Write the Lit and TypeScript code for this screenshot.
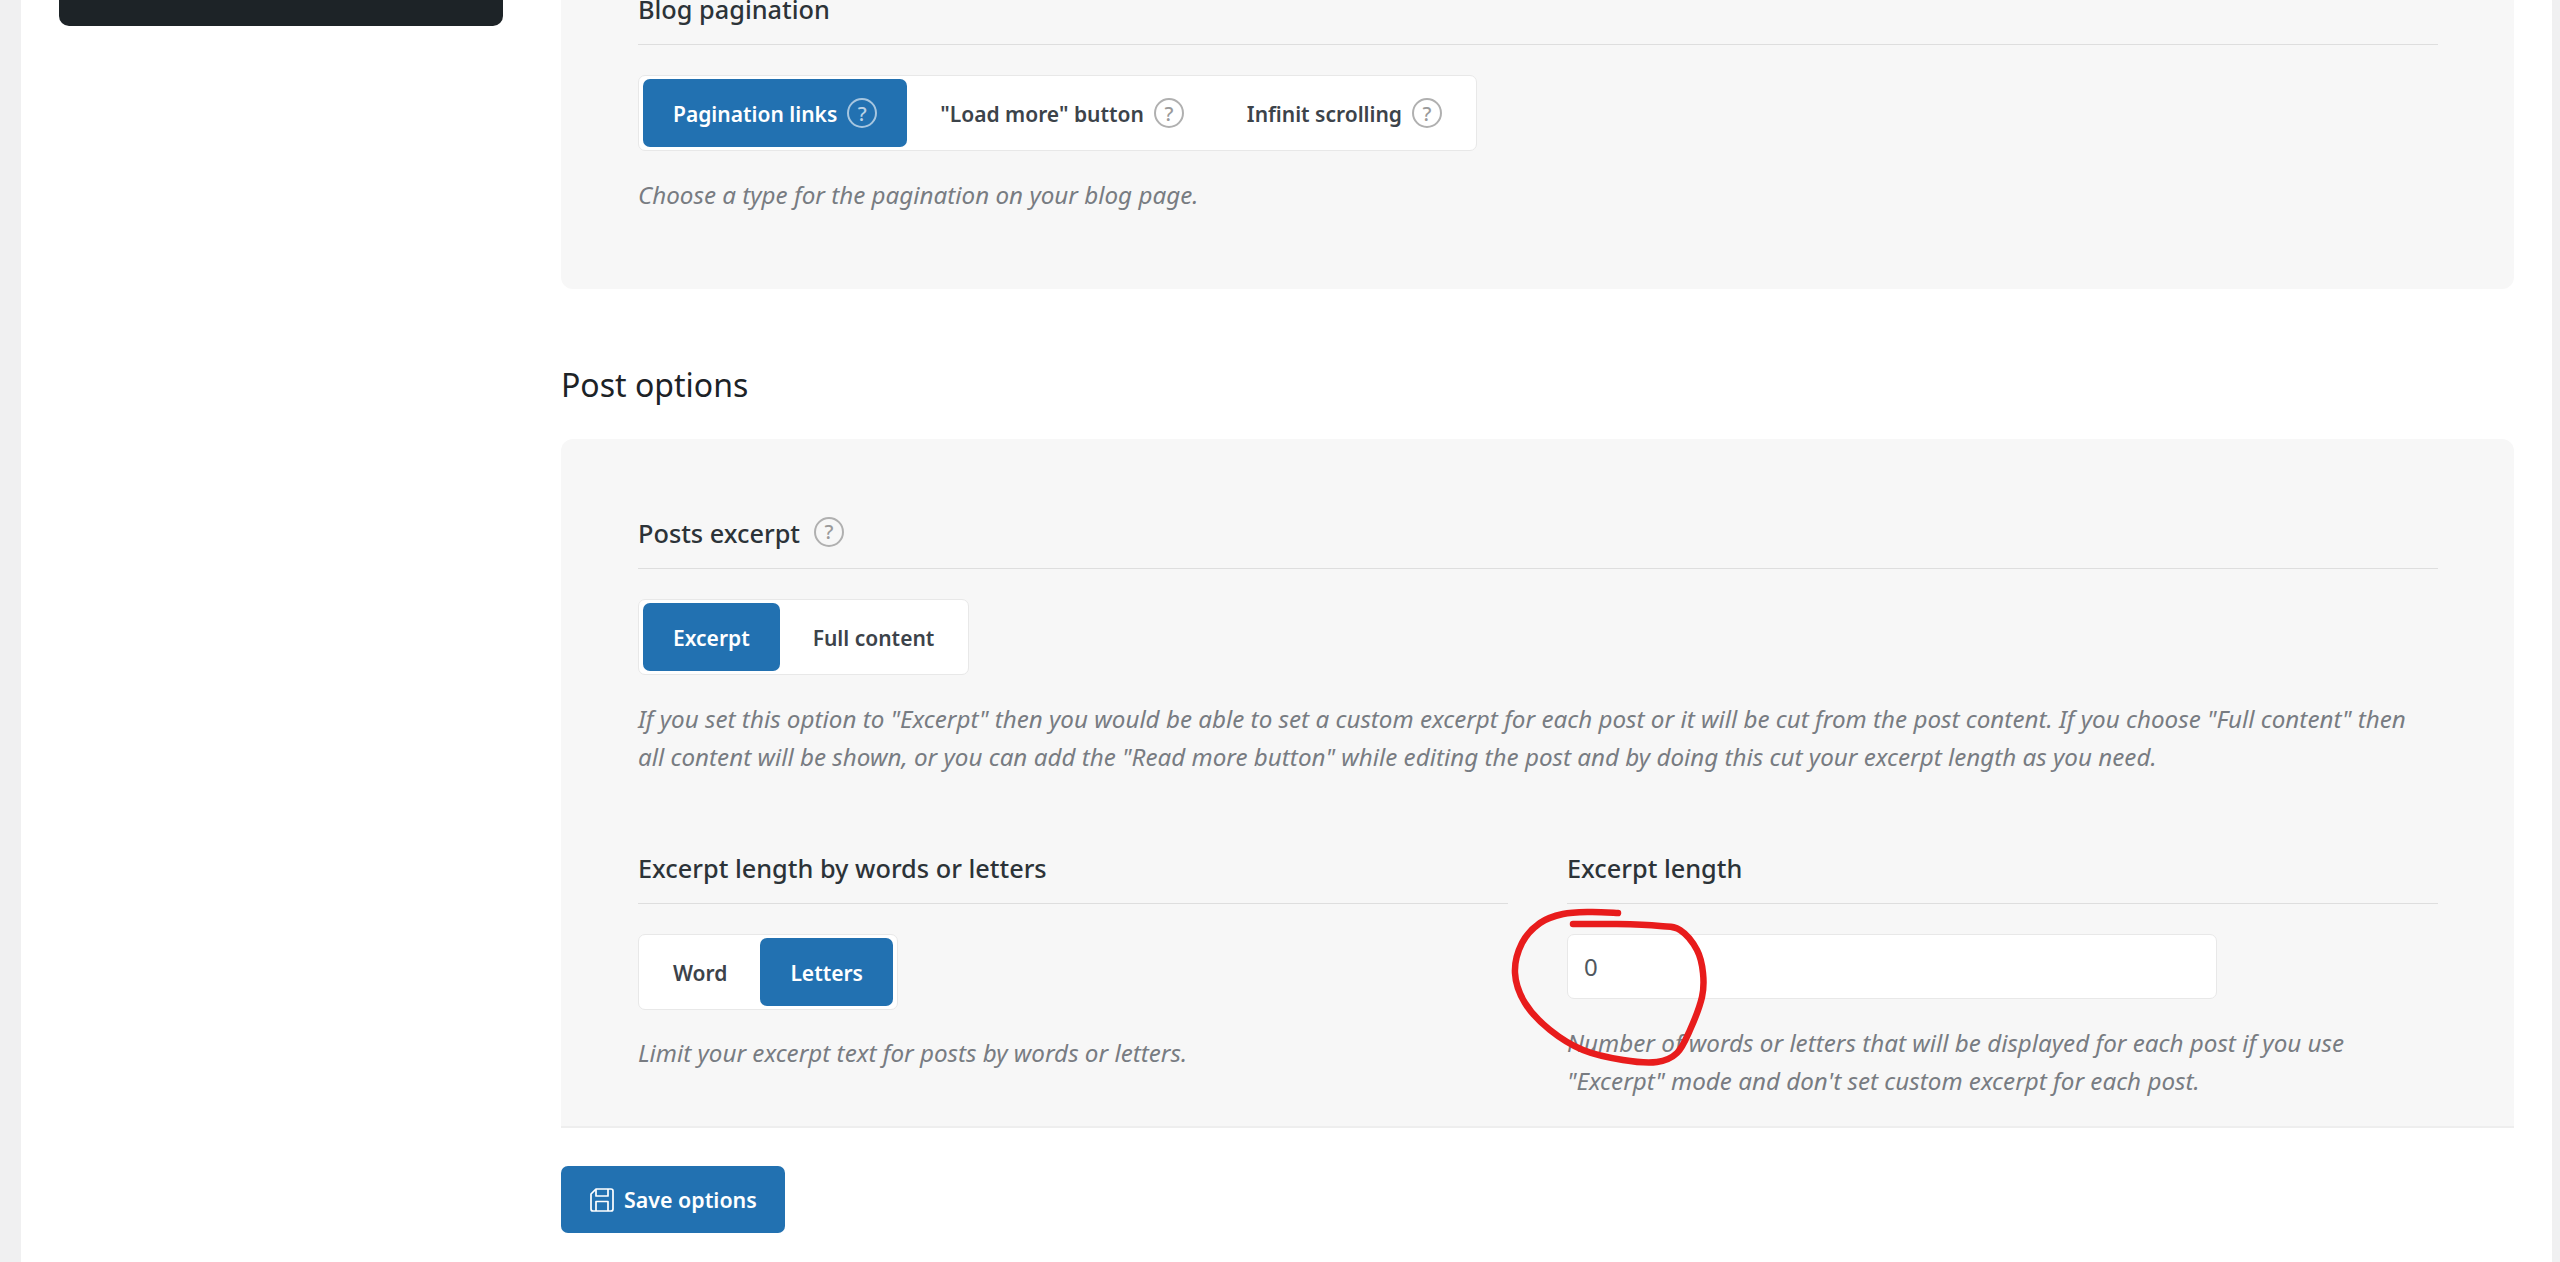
import { LitElement, html, css } from "lit";
import { customElement } from "lit/decorators.js";

const help = () => html`<span class="help">?</span>`;

const strokePoints: [number, number][] = [
  [1618, 913], [1590, 912], [1563, 914], [1540, 923], [1522, 943], [1515, 973],
  [1525, 1003], [1550, 1030], [1583, 1050], [1623, 1060], [1657, 1062], [1677, 1053],
  [1690, 1030], [1702, 997], [1703, 973], [1697, 950], [1680, 930], [1660, 926],
  [1617, 924], [1573, 924],
];

function smooth(points: [number, number][]): string {
  let d = `M${points[0][0]} ${points[0][1]}`;
  for (let i = 0; i < points.length - 1; i++) {
    const p0 = points[Math.max(i - 1, 0)];
    const p1 = points[i];
    const p2 = points[i + 1];
    const p3 = points[Math.min(i + 2, points.length - 1)];
    const c1x = p1[0] + (p2[0] - p0[0]) / 6;
    const c1y = p1[1] + (p2[1] - p0[1]) / 6;
    const c2x = p2[0] - (p3[0] - p1[0]) / 6;
    const c2y = p2[1] - (p3[1] - p1[1]) / 6;
    d += ` C${c1x.toFixed(1)} ${c1y.toFixed(1)} ${c2x.toFixed(1)} ${c2y.toFixed(1)} ${p2[0]} ${p2[1]}`;
  }
  return d;
}

@customElement("app-root")
export class AppRoot extends LitElement {
  static styles = css`
    :host {
      display: block;
      height: 1262px;
      overflow: hidden;
      position: relative;
      background: #f0f0f1;
      font-family: "Noto Sans", "Open Sans", sans-serif;
      color: #2c3338;
    }
    .page {
      margin: -60px 8px 0 21px;
      background: #fff;
      display: grid;
      grid-template-columns: 540px 1fr;
      padding-right: 38px;
      padding-bottom: 60px;
    }
    .side { padding-left: 38px; }
    .dark {
      width: 444px;
      height: 86px;
      background: #1d2327;
      border-radius: 0 0 10px 10px;
    }
    .panel {
      background: #f7f7f7;
      border-radius: 12px;
      padding: 0 76px 75px 77px;
    }
    .panel.first { padding-top: 54px; }
    .panel.last {
      padding-top: 79px;
      padding-bottom: 26px;
      border-radius: 12px 12px 0 0;
      border-bottom: 2px solid #eeeeee;
    }
    h2 {
      margin: 76px 0 34px;
      font-size: 32px;
      line-height: 40px;
      font-weight: 400;
      color: #1d2327;
    }
    .title {
      display: flex;
      align-items: center;
      gap: 14px;
      height: 30px;
      padding-bottom: 20px;
      border-bottom: 1px solid #dedede;
      font-size: 25.3px;
      line-height: 30px;
      font-weight: 500;
      color: #2c3338;
    }
    .toggle {
      display: inline-flex;
      gap: 3px;
      margin-top: 30px;
      padding: 3px 4px;
      background: #fff;
      border: 1px solid #e8e8e8;
      border-radius: 7px;
      vertical-align: top;
    }
    .btn {
      box-sizing: border-box;
      display: flex;
      align-items: center;
      gap: 10px;
      height: 68px;
      padding: 2px 30px 0;
      border-radius: 7px;
      font-size: 21px;
      font-weight: 600;
      color: #3c434a;
    }
    .btn.on { background: #2271b1; color: #fff; }
    .help {
      box-sizing: border-box;
      flex: none;
      display: inline-flex;
      align-items: center;
      justify-content: center;
      width: 30px;
      height: 30px;
      margin-top: -2px;
      border: 2px solid #b0b0b0;
      border-radius: 50%;
      font-size: 20px;
      font-weight: 500;
      color: #9a9a9a;
    }
    .btn.on .help { border-color: rgba(255,255,255,.6); color: rgba(255,255,255,.7); }
    .desc {
      margin: 25px 0 0;
      font-size: 24.2px;
      line-height: 38px;
      font-style: italic;
      font-weight: 400;
      color: #787c82;
    }
    .desc.tight { margin-top: 24px; }
    .cols {
      display: grid;
      grid-template-columns: 870px 871px;
      gap: 59px;
      margin-top: 77px;
    }
    .input {
      box-sizing: border-box;
      display: flex;
      align-items: center;
      width: 650px;
      height: 65px;
      margin-top: 30px;
      padding-left: 16px;
      background: #fff;
      border: 1px solid #e8e8e8;
      border-radius: 7px;
      font-size: 24px;
      color: #50575e;
    }
    .save {
      display: inline-flex;
      align-items: center;
      gap: 10px;
      margin: 38px 0 0;
      height: 67px;
      padding: 0 28px 0 29px;
      background: #2271b1;
      border-radius: 7px;
      color: #fff;
      font-size: 21.4px;
      font-weight: 600;
    }
    .save svg { width: 24px; height: 24px; flex: none; }
    .mark {
      position: absolute;
      left: 0;
      top: 0;
      width: 2560px;
      height: 1262px;
      pointer-events: none;
    }
  `;

  render() {
    return html`
      <div class="page">
        <aside class="side"><div class="dark"></div></aside>
        <main>
          <section class="panel first">
            <div class="title">Blog pagination</div>
            <div class="toggle">
              <div class="btn on">Pagination links ${help()}</div>
              <div class="btn">"Load more" button ${help()}</div>
              <div class="btn">Infinit scrolling ${help()}</div>
            </div>
            <p class="desc">Choose a type for the pagination on your blog page.</p>
          </section>

          <h2>Post options</h2>

          <section class="panel last">
            <div class="title">Posts excerpt ${help()}</div>
            <div class="toggle">
              <div class="btn on">Excerpt</div>
              <div class="btn">Full content</div>
            </div>
            <p class="desc">If you set this option to "Excerpt" then you would be able to set a custom excerpt for each post or it will be cut from the post content. If you choose "Full content" then all content will be shown, or you can add the "Read more button" while editing the post and by doing this cut your excerpt length as you need.</p>

            <div class="cols">
              <div>
                <div class="title">Excerpt length by words or letters</div>
                <div class="toggle">
                  <div class="btn">Word</div>
                  <div class="btn on">Letters</div>
                </div>
                <p class="desc tight">Limit your excerpt text for posts by words or letters.</p>
              </div>
              <div>
                <div class="title">Excerpt length</div>
                <div class="input">0</div>
                <p class="desc">Number of words or letters that will be displayed for each post if you use "Excerpt" mode and don't set custom excerpt for each post.</p>
              </div>
            </div>
          </section>

          <div class="save">
            <svg viewBox="0 0 24 24" fill="none" stroke="#fff" stroke-width="1.7" stroke-linejoin="round">
              <path d="M6 1H21a2 2 0 0 1 2 2V21a2 2 0 0 1-2 2H3a2 2 0 0 1-2-2V6z" />
              <path d="M6 1v7h12V1M6 23v-9.500h12V23" />
            </svg>
            Save options
          </div>
        </main>
      </div>
      <svg class="mark" viewBox="0 0 2560 1262" fill="none">
        <path d=${smooth(strokePoints)} stroke="#e81c1c" stroke-width="6.5" stroke-linecap="round" stroke-linejoin="round" />
      </svg>
    `;
  }
}
